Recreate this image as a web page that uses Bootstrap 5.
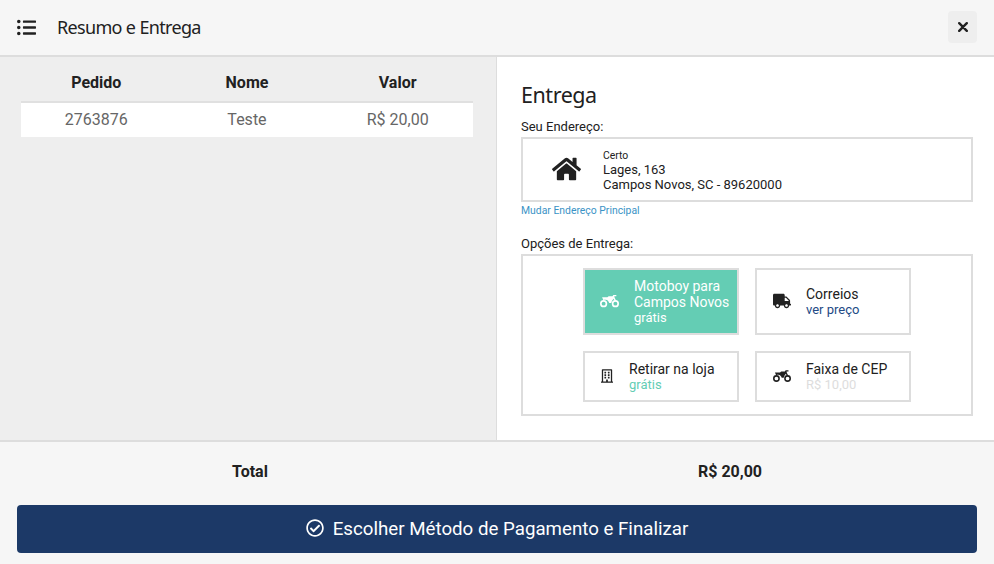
<!DOCTYPE html>
<html lang="pt-BR">
<head>
<meta charset="utf-8">
<title>Resumo e Entrega</title>
<link href="https://cdn.jsdelivr.net/npm/bootstrap@5.3.0/dist/css/bootstrap.min.css" rel="stylesheet">
<style>
html,body{height:564px;overflow:hidden}
body{font-family:Roboto,"Liberation Sans",sans-serif;color:#212121;background:#f6f6f6}
.shell{height:564px}
.top-bar{height:57px;border-bottom:2px solid #ddd;background:#f6f6f6;padding:0 17px}
.top-title{font-family:"Noto Sans",sans-serif;font-size:18px;margin-left:21px;letter-spacing:-.66px;color:#212121}
.close-box{width:29px;height:32px;background:#eee;border:0;border-radius:4px;margin-top:-1px;padding:0}
.mid-area{height:383px}
.left-pane{width:496px;background:#eee;padding:0 23px 0 21px}
.right-pane{width:498px;background:#fff;border-left:1px solid #ddd;padding:0 21px 0 24px}
.order-table{width:100%;table-layout:fixed;margin:0;text-align:center;font-size:16px}
.order-table th{height:45px;font-weight:700;font-size:16px;padding:8px 0 0;border-bottom:2px solid #e0e0e0;background:transparent;color:#212121;vertical-align:middle}
.order-table td{height:35px;padding:0;background:#fff;color:#666;vertical-align:middle;border:0}
.ship-title{font-family:"Noto Sans",sans-serif;font-size:21.500px;line-height:28px;margin:24px 0 0;letter-spacing:-.45px;font-weight:400;color:#212121}
.field-lbl{font-size:13px;line-height:15px;color:#212121}
.lbl-a{margin-top:10px;height:18px}
.addr-box{height:65px;border:2px solid #ddd;padding-top:2px}
.addr-ico{width:29px;height:26px;margin:-4px 22px 0 29px;fill:#212121}
.addr-name{font-size:10.400px;line-height:13px}
.addr-line{font-size:13px;line-height:15px}
.addr-link{font-size:10.400px;line-height:12px;color:#3a93c6;text-decoration:none;display:block;margin-top:3px}
.lbl-b{margin-top:19px;height:18px}
.opt-box{height:162px;border:2px solid #ddd;padding:12px 0 0}
.opt-grid{display:grid;grid-template-columns:156px 156px;column-gap:16px;row-gap:16px;justify-content:center}
.opt-card{border:2px solid #ddd;background:#fff;display:flex;align-items:center;color:#212121}
.opt-tall{height:67px}
.opt-short{height:51px}
.opt-sel{background:#64cdb4;color:#fff}
.opt-ico{width:18px;height:18px;flex:none;fill:#212121;margin:-2px 15px 0 16px}
.ico-moto{stroke:#212121}
.opt-sel .opt-ico{fill:#fff;stroke:#fff;width:19px;margin-left:15px}
.ico-b{width:12px;height:16px;margin-right:16px}
.opt-main{font-size:14px;line-height:16px}
.opt-sub{font-size:13px;line-height:16px}
.txt-teal{color:#64cdb4}
.txt-navy{color:#234a85}
.txt-mute{color:#ddd}
.foot-area{height:124px;border-top:2px solid #ddd;background:#f6f6f6;padding:0 17px}
.total-row{height:59px;margin-bottom:4px;font-size:16px;font-weight:700}
.total-a{width:466px;text-align:center}
.total-b{width:494px;text-align:center}
.pay-btn{background:#1c3967;color:#fff;border:0;border-radius:4px;height:48px;font-size:18.720px;width:100%}
.pay-btn:hover{background:#1c3967;color:#fff}
.pay-ico{width:18px;height:18px;fill:#fff;margin-right:9px;vertical-align:-2px}
</style>
</head>
<body>
<div class="shell d-flex flex-column">
  <header class="top-bar d-flex align-items-center justify-content-between">
    <div class="d-flex align-items-center">
      <svg width="19" height="19" viewBox="0 0 512 512" fill="#212121"><path d="M48 48a48 48 0 1 0 48 48 48 48 0 0 0-48-48zm0 160a48 48 0 1 0 48 48 48 48 0 0 0-48-48zm0 160a48 48 0 1 0 48 48 48 48 0 0 0-48-48zm448 16H176a16 16 0 0 0-16 16v32a16 16 0 0 0 16 16h320a16 16 0 0 0 16-16v-32a16 16 0 0 0-16-16zm0-320H176a16 16 0 0 0-16 16v32a16 16 0 0 0 16 16h320a16 16 0 0 0 16-16V80a16 16 0 0 0-16-16zm0 160H176a16 16 0 0 0-16 16v32a16 16 0 0 0 16 16h320a16 16 0 0 0 16-16v-32a16 16 0 0 0-16-16z"/></svg>
      <span class="top-title">Resumo e Entrega</span>
    </div>
    <button class="close-box d-flex align-items-center justify-content-center" aria-label="Fechar">
      <svg width="10" height="10" viewBox="0 0 10 10"><path d="M1.200 1.200l7.600 7.600M8.800 1.200L1.200 8.800" stroke="#212121" stroke-width="2.400" stroke-linecap="round"/></svg>
    </button>
  </header>
  <main class="mid-area d-flex">
    <section class="left-pane">
      <table class="table order-table">
        <thead><tr><th>Pedido</th><th>Nome</th><th>Valor</th></tr></thead>
        <tbody><tr><td>2763876</td><td>Teste</td><td>R$ 20,00</td></tr></tbody>
      </table>
    </section>
    <section class="right-pane">
      <h2 class="ship-title">Entrega</h2>
      <div class="field-lbl lbl-a">Seu Endereço:</div>
      <div class="addr-box d-flex align-items-center">
        <svg class="addr-ico" viewBox="0 0 576 512"><path d="M280.370 148.260L96 300.110V464a16 16 0 0 0 16 16l112.060-.29a16 16 0 0 0 15.920-16V368a16 16 0 0 1 16-16h64a16 16 0 0 1 16 16v95.640a16 16 0 0 0 16 16.050L464 480a16 16 0 0 0 16-16V300L295.670 148.260a12.190 12.190 0 0 0-15.300 0zM571.600 251.470L488 182.560V44.050a12 12 0 0 0-12-12h-56a12 12 0 0 0-12 12v72.610L318.470 43a48 48 0 0 0-61 0L4.340 251.470a12 12 0 0 0-1.600 16.900l25.500 31A12 12 0 0 0 45.150 301l235.220-193.740a12.190 12.190 0 0 1 15.300 0L530.900 301a12 12 0 0 0 16.900-1.600l25.500-31a12 12 0 0 0-1.700-16.930z"/></svg>
        <div>
          <div class="addr-name">Certo</div>
          <div class="addr-line">Lages, 163</div>
          <div class="addr-line">Campos Novos, SC - 89620000</div>
        </div>
      </div>
      <a class="addr-link" href="#">Mudar Endereço Principal</a>
      <div class="field-lbl lbl-b">Opções de Entrega:</div>
      <div class="opt-box">
        <div class="opt-grid">
          <div class="opt-card opt-tall opt-sel">
            <svg class="opt-ico ico-moto" viewBox="0 0 640 512"><path d="M70 130h180l40-30h130l30-45h100v45h-70l15 50 50 100-40 25-50-95-50 70-25 70h-70c-10-50-60-110-120-110-30 0-55 5-80 15z" stroke="none"/><g fill="none" stroke-width="56"><circle cx="122" cy="345" r="94"/><circle cx="518" cy="345" r="94"/></g></svg>
            <div class="opt-body">
              <div class="opt-main">Motoboy para<br>Campos Novos</div>
              <div class="opt-sub">grátis</div>
            </div>
          </div>
          <div class="opt-card opt-tall">
            <svg class="opt-ico" viewBox="0 0 640 512"><path d="M624 352h-16V243.900c0-12.700-5.100-24.900-14.100-33.900L494 110.100c-9-9-21.200-14.100-33.900-14.100H416V48c0-26.500-21.500-48-48-48H48C21.500 0 0 21.500 0 48v320c0 26.500 21.500 48 48 48h16c0 53 43 96 96 96s96-43 96-96h128c0 53 43 96 96 96s96-43 96-96h48c8.800 0 16-7.200 16-16v-32c0-8.800-7.200-16-16-16zM160 464c-26.500 0-48-21.500-48-48s21.500-48 48-48 48 21.500 48 48-21.500 48-48 48zm320 0c-26.500 0-48-21.500-48-48s21.500-48 48-48 48 21.500 48 48-21.500 48-48 48zm80-208H416V144h44.100l99.900 99.900V256z"/></svg>
            <div class="opt-body">
              <div class="opt-main">Correios</div>
              <div class="opt-sub txt-navy">ver preço</div>
            </div>
          </div>
          <div class="opt-card opt-short">
            <svg class="opt-ico ico-b" viewBox="0 0 448 512"><path d="M128 148v-40c0-6.600 5.400-12 12-12h40c6.600 0 12 5.400 12 12v40c0 6.600-5.400 12-12 12h-40c-6.600 0-12-5.400-12-12zm140 12h40c6.600 0 12-5.400 12-12v-40c0-6.600-5.400-12-12-12h-40c-6.600 0-12 5.400-12 12v40c0 6.600 5.400 12 12 12zm-128 96h40c6.600 0 12-5.400 12-12v-40c0-6.600-5.400-12-12-12h-40c-6.600 0-12 5.400-12 12v40c0 6.600 5.400 12 12 12zm128 0h40c6.600 0 12-5.400 12-12v-40c0-6.600-5.400-12-12-12h-40c-6.600 0-12 5.400-12 12v40c0 6.600 5.400 12 12 12zm-76 84v-40c0-6.600-5.400-12-12-12h-40c-6.600 0-12 5.400-12 12v40c0 6.600 5.400 12 12 12h40c6.600 0 12-5.400 12-12zm76 12h40c6.600 0 12-5.400 12-12v-40c0-6.600-5.400-12-12-12h-40c-6.600 0-12 5.400-12 12v40c0 6.600 5.400 12 12 12zm180 124v36H0v-36c0-6.600 5.400-12 12-12h19.500V24c0-13.300 10.700-24 24-24h337c13.300 0 24 10.700 24 24v440H436c6.600 0 12 5.400 12 12zM79.500 463H192v-67c0-6.600 5.400-12 12-12h40c6.600 0 12 5.400 12 12v67h112.500V49L80 48l-.5 415z"/></svg>
            <div class="opt-body">
              <div class="opt-main">Retirar na loja</div>
              <div class="opt-sub txt-teal">grátis</div>
            </div>
          </div>
          <div class="opt-card opt-short">
            <svg class="opt-ico ico-moto" viewBox="0 0 640 512"><path d="M70 130h180l40-30h130l30-45h100v45h-70l15 50 50 100-40 25-50-95-50 70-25 70h-70c-10-50-60-110-120-110-30 0-55 5-80 15z" stroke="none"/><g fill="none" stroke-width="56"><circle cx="122" cy="345" r="94"/><circle cx="518" cy="345" r="94"/></g></svg>
            <div class="opt-body">
              <div class="opt-main">Faixa de CEP</div>
              <div class="opt-sub txt-mute">R$ 10,00</div>
            </div>
          </div>
        </div>
      </div>
    </section>
  </main>
  <footer class="foot-area">
    <div class="total-row d-flex align-items-center">
      <div class="total-a">Total</div>
      <div class="total-b">R$ 20,00</div>
    </div>
    <button class="btn pay-btn">
      <svg class="pay-ico" viewBox="0 0 512 512"><path d="M256 8C119.033 8 8 119.033 8 256s111.033 248 248 248 248-111.033 248-248S392.967 8 256 8zm0 48c110.532 0 200 89.451 200 200 0 110.532-89.451 200-200 200-110.532 0-200-89.451-200-200 0-110.532 89.451-200 200-200m140.204 130.267l-22.536-22.718c-4.667-4.705-12.265-4.736-16.970-.068L215.346 303.697l-59.792-60.277c-4.667-4.705-12.265-4.736-16.970-.069l-22.719 22.536c-4.705 4.667-4.736 12.265-.068 16.971l90.781 91.516c4.667 4.705 12.265 4.736 16.970.068l172.589-171.204c4.704-4.668 4.734-12.266.067-16.971z"/></svg>Escolher Método de Pagamento e Finalizar
    </button>
  </footer>
</div>
</body>
</html>
